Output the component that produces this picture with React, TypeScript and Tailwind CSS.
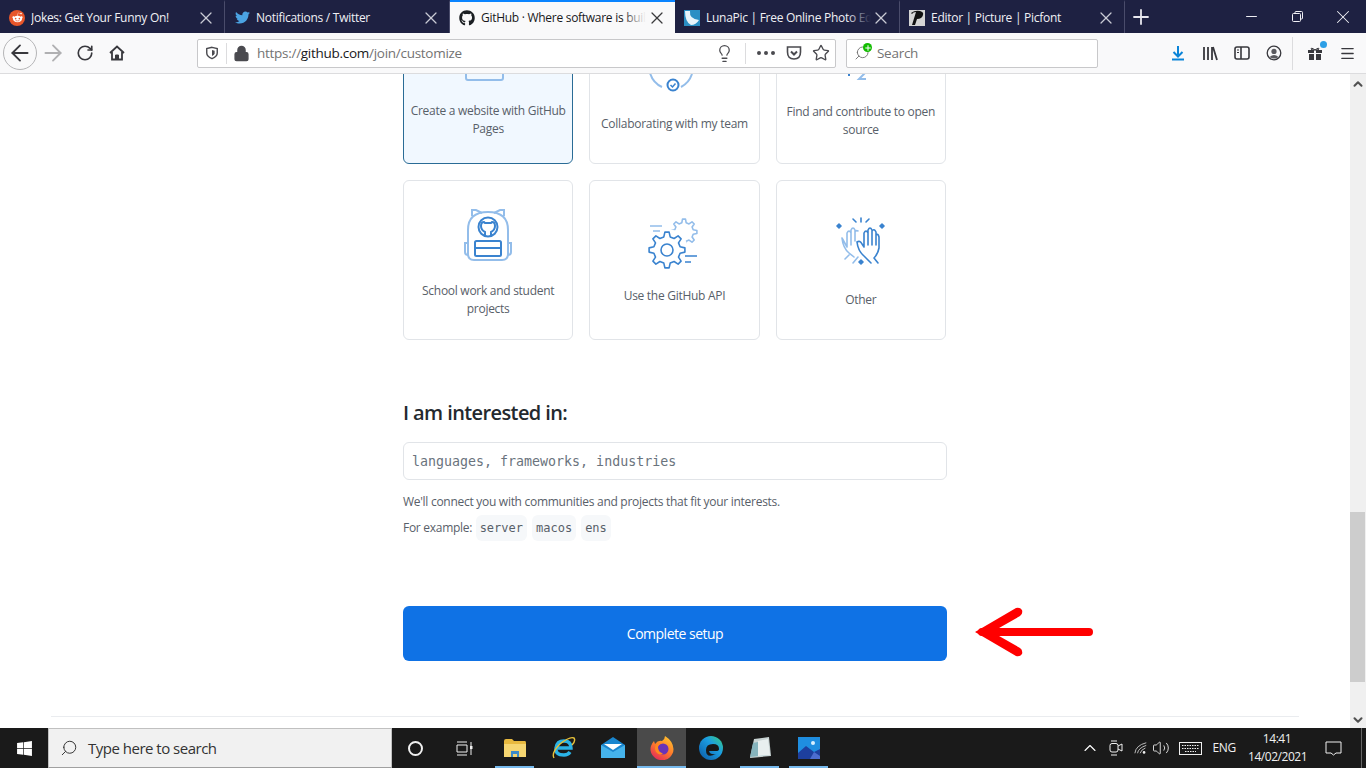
import React from 'react';
import { FaGithub, FaRedditAlien, FaTwitter, FaWindows } from 'react-icons/fa';
import {
  ArrowLeft,
  ArrowRight,
  ChevronDown,
  ChevronUp,
  Ellipsis,
  Lightbulb,
  Lock,
  Menu,
  Minus,
  Plus,
  RotateCw,
  Search,
  Star,
  Volume2,
  X,
} from 'lucide-react';

const BLUE = '#3a83cf';
const LIGHT = '#93bdea';

const gearPath = (cx: number, cy: number, outer: number, inner: number, teeth: number) => {
  const pts: string[] = [];
  for (let i = 0; i < teeth; i++) {
    const a = (i / teeth) * Math.PI * 2;
    const w = Math.PI / teeth / 2;
    [
      [inner, a - w * 1.2],
      [outer, a - w * 0.6],
      [outer, a + w * 0.6],
      [inner, a + w * 1.2],
    ].forEach(([r, t]) => {
      pts.push(`${(cx + r * Math.cos(t)).toFixed(1)} ${(cy + r * Math.sin(t)).toFixed(1)}`);
    });
  }
  return `M${pts.join('L')}Z`;
};

const WebsiteIcon = () => (
  <svg width="56" height="56" viewBox="0 0 56 56" fill="none" strokeWidth="2" stroke={LIGHT}>
    <rect x="6" y="10" width="37" height="40" rx="2" />
  </svg>
);

const TeamIcon = () => (
  <svg width="64" height="64" viewBox="0 0 64 64" fill="none" strokeWidth="2">
    <path d="M8 38 Q11 48 20 52" stroke={LIGHT} />
    <path d="M39 52 Q47 48 50 39" stroke={LIGHT} />
    <circle cx="31" cy="50" r="5.5" stroke={BLUE} />
    <path d="M28.5 50 l2 2 l3 -3.5" stroke={BLUE} strokeWidth="1.5" />
  </svg>
);

const OpenSourceIcon = () => (
  <svg width="58" height="58" viewBox="0 0 58 58" fill="none" strokeWidth="2" stroke={LIGHT}>
    <path d="M17 44 v3" stroke={BLUE} />
    <path d="M34 43 L27 50 H34" />
  </svg>
);

const BackpackIcon = () => (
  <svg width="64" height="64" viewBox="0 0 64 64" fill="none" strokeWidth="2">
    <path d="M16 14 V8 H20 L26 11 M48 14 V8 H44 L38 11" stroke={LIGHT} />
    <path d="M12 52 V28 Q12 10 32 10 Q52 10 52 28 V52 Q52 58 46 58 H18 Q12 58 12 52Z" stroke={LIGHT} />
    <path d="M12 41 H9 V50 Q9 53 12 53 M52 41 H55 V50 Q55 53 52 53" stroke={LIGHT} />
    <circle cx="32" cy="25" r="9.5" stroke={BLUE} />
    <path d="M29 34 V30 Q25 28 25 24 Q25 20 28 20 L29 21 H35 L36 20 Q39 20 39 24 Q39 28 35 30 V34" stroke={BLUE} />
    <rect x="19" y="39" width="26" height="15" rx="1.5" stroke={BLUE} />
    <path d="M19 46 H45" stroke={BLUE} />
  </svg>
);

const GearsIcon = () => (
  <svg width="56" height="56" viewBox="0 0 56 56" fill="none" strokeWidth="1.6">
    <path d={gearPath(38, 17, 13, 9.5, 8)} stroke={LIGHT} strokeLinejoin="round" />
    <circle cx="21" cy="35" r="21" fill="#fff" />
    <path d={gearPath(21, 35, 18, 13.5, 8)} stroke={BLUE} strokeLinejoin="round" fill="#fff" />
    <circle cx="21" cy="35" r="6" stroke={BLUE} />
    <path d="M4 11 H16 M7 16 H14" stroke={LIGHT} />
    <path d="M39 41 H51 M39 47 H45" stroke={BLUE} />
  </svg>
);

const HandsIcon = () => (
  <svg width="64" height="64" viewBox="0 0 64 64" fill="none" strokeWidth="1.6" strokeLinecap="round" strokeLinejoin="round">
    <path d="M32 7 V11 M24 8 L27 11 M40 8 L37 11" stroke={BLUE} />
    <path d="M10 13 L12 15 L10 17 L8 15Z M53 13 L55 15 L53 17 L51 15Z M32 49 L34 51 L32 53 L30 51Z" fill={BLUE} stroke={BLUE} />
    <path d="M13 27 L18 36 V22 Q20 18 22 22 V19 Q24 15 26 19 V21 Q27 19 29 20 M13 27 Q14 37 20 42 L25 46 M22 22 V34 M26 19 V30 M16 48 L20 44 M24 52 L29 46" stroke={LIGHT} />
    <path d="M28 31 Q31 29 33 33 L35 36 V22 Q37 18 39 22 V19 Q41 15 43 19 V20 Q45 17 47 21 V24 Q49 22 50 26 V37 Q49 43 45 47 L49 52 M28 31 Q29 40 35 45 L42 52 M39 22 V34 M43 19 V34 M47 21 V34" stroke={BLUE} />
  </svg>
);

const cards = [
  { label: 'Create a website with GitHub Pages', icon: <WebsiteIcon />, selected: true },
  { label: 'Collaborating with my team', icon: <TeamIcon /> },
  { label: 'Find and contribute to open source', icon: <OpenSourceIcon /> },
  { label: 'School work and student projects', icon: <BackpackIcon /> },
  { label: 'Use the GitHub API', icon: <GearsIcon /> },
  { label: 'Other', icon: <HandsIcon /> },
];

const Tab = ({
  icon,
  title,
  active,
  fade,
}: {
  icon: React.ReactNode;
  title: string;
  active?: boolean;
  fade?: boolean;
}) => (
  <div
    className={`relative flex h-[33px] w-[225px] items-center pl-[9px] pr-[8px] ${
      active
        ? 'border-t-2 border-[#0a84ff] bg-[#f9f9fa] text-[#18181a]'
        : 'border-r border-t-2 border-r-[#4a4c6b] border-t-transparent text-[#f0f0f5]'
    }`}
  >
    <span className="flex h-4 w-4 shrink-0 items-center justify-center">{icon}</span>
    <span className="relative ml-[6px] w-[165px] overflow-hidden whitespace-nowrap text-xs">
      {title}
      {fade && (
        <span
          className={`absolute right-0 top-0 h-full w-6 bg-gradient-to-r from-transparent ${
            active ? 'to-[#f9f9fa]' : 'to-[#1e2142]'
          }`}
        />
      )}
    </span>
    <X size={20} strokeWidth={1.5} className={`ml-auto ${active ? 'text-[#3a3a3c]' : 'text-[#c9cad4]'}`} />
  </div>
);

const TabBar = () => (
  <div className="flex h-[33px] shrink-0 items-center bg-[#1e2142]">
    <Tab
      title="Jokes: Get Your Funny On!"
      icon={
        <span className="flex h-4 w-4 items-center justify-center rounded-full bg-[#e8562a]">
          <FaRedditAlien size={11} className="text-white" />
        </span>
      }
    />
    <Tab title="Notifications / Twitter" icon={<FaTwitter size={15} className="text-[#4ba3e3]" />} />
    <Tab title="GitHub · Where software is built" active fade icon={<FaGithub size={16} className="text-[#1b1f23]" />} />
    <Tab
      title="LunaPic | Free Online Photo Editor"
      fade
      icon={
        <svg width="16" height="16" viewBox="0 0 16 16">
          <rect width="16" height="16" fill="#2b8fc4" />
          <path d="M1 1 h5 q-1 8 9 9 q-3 5 -8 5 q-6 -3 -6 -14z" fill="#e8f4fa" />
        </svg>
      }
    />
    <Tab
      title="Editor | Picture | Picfont"
      icon={
        <span className="flex h-4 w-4 items-center justify-center bg-[#d5d5d5]">
          <svg width="14" height="16" viewBox="0 0 14 16">
            <path d="M1 3 q4 -3 9 -2 q4 1 3 4 q-1 4 -6 4 l-2 6 h-3 l4 -13 q-3 0 -4 2z" fill="#111" />
          </svg>
        </span>
      }
    />
    <Plus size={24} strokeWidth={1.8} className="ml-[4px] text-[#e8e8ef]" />
    <div className="ml-auto flex items-center text-[#f0f0f5]">
      <Minus size={17} strokeWidth={1.4} className="mr-[32px]" />
      <svg width="11" height="11" viewBox="0 0 11 11" fill="none" stroke="#f0f0f5" className="mr-[29px]">
        <rect x="0.5" y="2.5" width="8" height="8" rx="1" />
        <path d="M3 2.5 V1.5 Q3 0.5 4 0.5 H9.5 Q10.5 0.5 10.5 1.5 V7 Q10.5 8 9.5 8 H8.5" />
      </svg>
      <X size={22} strokeWidth={1.1} className="mr-[12px]" />
    </div>
  </div>
);

const GiftIcon = () => (
  <span className="relative block h-4 w-4">
    <svg width="16" height="16" viewBox="0 0 16 16" fill="#38383d">
      <path d="M1 5 h6 v3 h-6z M9 5 h6 v3 h-6z M2 9 h5 v6 h-5z M9 9 h5 v6 h-5z" />
      <path d="M8 5 q-4 -3 -4 -1 q0 1 4 1 q4 0 4 -1 q0 -2 -4 1" fill="none" stroke="#38383d" />
    </svg>
    <span className="absolute -right-1 -top-1 h-[7px] w-[7px] rounded-full bg-[#2c9fe6]" />
  </span>
);

const Toolbar = () => (
  <div className="flex h-[41px] shrink-0 items-center border-b border-[#dcdcde] bg-[#f9f9fa] text-[#38383d]">
    <span className="ml-[3px] flex h-[34px] w-[34px] items-center justify-center rounded-full border border-[#b5b5b7]">
      <ArrowLeft size={26} strokeWidth={1.7} />
    </span>
    <ArrowRight size={26} strokeWidth={1.7} className="ml-[3px] text-[#b0b0b2]" />
    <RotateCw size={18} strokeWidth={2.2} className="ml-[10px] mr-[1px]" />
    <svg width="16" height="16" viewBox="0 0 16 16" fill="none" stroke="#38383d" strokeWidth="1.8" className="ml-[14px] mr-[2px]">
      <path d="M1 8 L8 1.5 L15 8 M3 7 V14.5 H13 V7" />
      <path d="M6.5 14.5 V10 H9.5 V14.5" fill="#38383d" strokeWidth="1" />
    </svg>

    <div className="ml-[70px] flex h-[29px] w-[639px] items-center rounded-[2px] border border-[#c8c8ca] bg-white">
      <svg width="14" height="14" viewBox="0 0 16 16" fill="none" stroke="#4a4a4f" strokeWidth="1.6" className="ml-[7px]">
        <path d="M8 1.5 l6 1.5 v5 q0 4 -6 6.5 q-6 -2.5 -6 -6.5 v-5z" />
        <path d="M8 4.5 l3 .8 v3 q0 2 -3 3.2z" fill="#4a4a4f" stroke="none" />
      </svg>
      <span className="ml-[7px] h-[21px] w-px bg-[#dcdcde]" />
      <Lock size={17} fill="#4a4a4f" strokeWidth={2} className="ml-[6px] text-[#4a4a4f]" />
      <span className="ml-[7px] mt-[1px] text-[13.5px] text-[#737373]">
        https://<span className="text-[#18181a]">github.com</span>/join/customize
      </span>
      <Lightbulb size={19} strokeWidth={1.6} className="ml-auto text-[#4a4a4f]" />
      <span className="ml-[11px] h-[21px] w-px bg-[#dcdcde]" />
      <Ellipsis size={24} strokeWidth={2} className="ml-[8px] text-[#4a4a4f]" />
      <svg width="16" height="16" viewBox="0 0 16 16" fill="none" stroke="#4a4a4f" strokeWidth="1.6" className="ml-[8px]">
        <path d="M1.5 2 h13 v5 q0 7 -6.5 7 q-6.5 0 -6.5 -7z" />
        <path d="M5 6.5 l3 3 l3 -3" strokeWidth="2" />
      </svg>
      <Star size={18} strokeWidth={1.8} className="ml-[10px] mr-[5px] text-[#4a4a4f]" />
    </div>

    <div className="ml-[10px] flex h-[29px] w-[252px] items-center rounded-[2px] border border-[#c8c8ca] bg-white">
      <span className="relative ml-[7px] block h-4 w-4">
        <Search size={16} strokeWidth={1.4} className="-scale-x-100 text-[#737373]" />
        <span className="absolute -right-[2px] -top-[2px] flex h-[9px] w-[9px] items-center justify-center rounded-full bg-[#12bc00]">
          <Plus size={8} strokeWidth={3} className="text-white" />
        </span>
      </span>
      <span className="ml-[7px] mt-[1px] text-[13.5px] text-[#737373]">Search</span>
    </div>

    <svg width="14" height="16" viewBox="0 0 14 16" fill="none" stroke="#0a84d8" strokeWidth="2" className="ml-[73px]">
      <path d="M7 1 v10 M2.5 7 l4.5 4.5 l4.5 -4.5" />
      <path d="M1 14.5 h12" />
    </svg>
    <svg width="16" height="15" viewBox="0 0 16 15" fill="none" stroke="#38383d" strokeWidth="1.8" className="ml-[17px]">
      <path d="M2 1 v13 M6 1 v13 M10 1 v13 M11 1 l4 13" />
    </svg>
    <svg width="16" height="14" viewBox="0 0 16 14" fill="none" stroke="#38383d" strokeWidth="1.6" className="ml-[16px]">
      <rect x="1" y="1" width="14" height="12" rx="2" />
      <path d="M7 1 v12" />
      <path d="M3 4 h2 M3 6.5 h2" strokeWidth="1.2" />
    </svg>
    <svg width="16" height="16" viewBox="0 0 16 16" fill="none" stroke="#38383d" strokeWidth="1.3" className="ml-[16px]">
      <circle cx="8" cy="8" r="6.8" />
      <circle cx="8" cy="6.4" r="2.6" fill="#5a5a5f" stroke="none" />
      <path d="M3.5 12 q4.5 -4 9 0 q-4.5 3 -9 0" fill="#5a5a5f" stroke="none" />
    </svg>
    <span className="ml-[10px] h-[33px] w-px bg-[#dcdcde]" />
    <span className="ml-[14px]">
      <GiftIcon />
    </span>
    <Menu size={17} strokeWidth={1.8} className="ml-[16px]" />
  </div>
);

const Card = ({ label, icon, selected }: { label: string; icon: React.ReactNode; selected?: boolean }) => (
  <div
    className={`flex h-[160px] flex-col items-center justify-center rounded-md border px-[6px] text-center ${
      selected ? 'border-[#2a6c96] bg-[#f1f8ff]' : 'border-[#e1e4e8] bg-white'
    }`}
  >
    {icon}
    <p className="mt-4 text-xs leading-[18px] text-[#586069]">{label}</p>
  </div>
);

const Page = () => (
  <div className="relative min-w-0 flex-1 overflow-hidden bg-white">
    <div className="mx-auto -mt-[70px] w-[544px]">
      <div className="grid w-[543px] grid-cols-3 gap-4">
        {cards.map((card) => (
          <Card key={card.label} {...card} />
        ))}
      </div>

      <h2 className="mt-[58px] text-xl font-semibold leading-[30px] tracking-[-0.6px] text-[#24292e]">I am interested in:</h2>
      <div className="mt-[14px] flex h-[38px] items-center rounded-md border border-[#e1e4e8] px-2 pt-[1px] font-['DejaVu_Sans_Mono',monospace] text-[13.3px] tracking-normal text-[#6a737d]">
        languages, frameworks, industries
      </div>
      <p className="mt-[13px] text-xs leading-[18px] text-[#586069]">
        We'll connect you with communities and projects that fit your interests.
      </p>
      <div className="mt-[4px] flex h-[26px] items-center text-xs text-[#586069]">
        <span className="mr-[1px]">For example:</span>
        {['server', 'macos', 'ens'].map((tag) => (
          <span
            key={tag}
            className="mx-[2.5px] flex h-[26px] items-center rounded-md bg-[#f6f8fa] px-1 font-['DejaVu_Sans_Mono',monospace] text-[12px] tracking-normal"
          >
            {tag}
          </span>
        ))}
      </div>

      <button
        type="button"
        className="mt-[65px] flex h-[55px] w-full items-center justify-center rounded-md bg-[#0f72e5] text-sm tracking-[-0.5px] text-white"
      >
        Complete setup
      </button>
    </div>
    <div className="mx-[51px] mt-[55px] h-px bg-[#eaecef]" />

    <svg width="130" height="60" viewBox="0 0 130 60" fill="none" className="absolute left-[970px] top-[528px]">
      <path d="M12 30 H119" stroke="#ff0000" strokeWidth="8" strokeLinecap="round" />
      <path d="M5 30 L46 6 Q50 5 52 8 Q53 12 50 14 L22 30 L50 46 Q53 48 52 52 Q50 55 46 54 Z" fill="#ff0000" />
    </svg>
  </div>
);

const Scrollbar = () => (
  <div className="flex w-4 shrink-0 flex-col bg-[#f0f0f0]">
    <ChevronUp size={14} strokeWidth={3.5} className="mx-auto mt-[3px] text-[#505050]" />
    <div className="mt-[421px] h-[170px] w-[15px] bg-[#cdcdcd]" />
    <ChevronDown size={14} strokeWidth={3.5} className="mx-auto mb-[1px] mt-auto text-[#505050]" />
  </div>
);

const FolderIcon = () => (
  <svg width="24" height="22" viewBox="0 0 24 22">
    <path d="M1 4 q0 -2 2 -2 h6 l2 2 h11 q1 0 1 2 v14 h-22z" fill="#e8b93f" />
    <path d="M1 7 h22 v13 h-22z" fill="#f6d672" />
    <path d="M8 14 h8 v6 h-2 v-3 h-4 v3 h-2z" fill="#3d8bc9" />
  </svg>
);

const IeIcon = () => (
  <svg width="24" height="24" viewBox="0 0 24 24" fill="none">
    <path d="M4 12 h15 q0 -7 -7 -7 q-7 0 -8 7 q-1 7 8 7 q4 0 6 -3" stroke="#2bb3e6" strokeWidth="3.4" />
    <path d="M2 22 Q-1 17 8 8 Q18 0 22 2 Q24 5 20 9" stroke="#e8c23a" strokeWidth="1.4" />
  </svg>
);

const MailIcon = () => (
  <svg width="24" height="22" viewBox="0 0 24 22">
    <path d="M0 8 L12 0 L24 8 V21 H0z" fill="#1a86cf" />
    <path d="M0 8 L12 15 L24 8 V21 H0z" fill="#45b3ec" />
    <path d="M3 7 h18 l-9 6z" fill="#fff" />
  </svg>
);

const FirefoxIcon = () => (
  <svg width="24" height="24" viewBox="0 0 24 24">
    <defs>
      <linearGradient id="ffx" x1="0.8" y1="0" x2="0.2" y2="1">
        <stop offset="0" stopColor="#ffc52e" />
        <stop offset="0.5" stopColor="#ff7a2b" />
        <stop offset="1" stopColor="#e3265c" />
      </linearGradient>
    </defs>
    <path d="M15 0 Q23 5 23.5 13 A11.5 11 0 1 1 1 10 Q2 7 4 5 L5 8 Q8 4 12 5 Q15 3 15 0Z" fill="url(#ffx)" />
    <circle cx="13" cy="13" r="5.5" fill="#6a33b8" />
    <path d="M6 9 Q9 6 12 7.5 Q8 8 8 11 Q8 16 13 17.5 Q9 20 6 16 Q4 12 6 9Z" fill="#ff8a1f" />
  </svg>
);

const EdgeIcon = () => (
  <svg width="24" height="24" viewBox="0 0 24 24">
    <defs>
      <linearGradient id="edg" x1="0" y1="1" x2="1" y2="0">
        <stop offset="0" stopColor="#0c59a4" />
        <stop offset="0.6" stopColor="#1b9de2" />
        <stop offset="1" stopColor="#3bd17a" />
      </linearGradient>
    </defs>
    <circle cx="12" cy="12" r="12" fill="url(#edg)" />
    <path d="M7 14 q0 -6 7 -6 q6 0 6 5 q0 2 -3 2 h-7 q1 4 7 3 q-10 5 -10 -4z" fill="#181818" />
  </svg>
);

const NotepadIcon = () => (
  <svg width="24" height="24" viewBox="0 0 24 24">
    <path d="M6 3 L21 1 L23 20 L2 22z" fill="#c9d4d4" />
    <path d="M5 7 L19 4 L21 19 L2 21z" fill="#86b4bd" />
    <path d="M10 5 L20 3 L22 19 L10 20z" fill="#e8efef" />
  </svg>
);

const PhotosIcon = () => (
  <svg width="22" height="22" viewBox="0 0 22 22">
    <rect width="22" height="22" fill="#1f8ee0" />
    <circle cx="15" cy="6" r="2" fill="#d8f0ff" />
    <path d="M0 22 V16 L8 9 L16 15 L22 12 V22z" fill="#1d3f9e" />
    <path d="M12 22 L16 15 L22 19 V22z" fill="#4c6dd0" />
  </svg>
);

const taskApps = [
  { icon: <FolderIcon />, open: true },
  { icon: <IeIcon /> },
  { icon: <MailIcon /> },
  { icon: <FirefoxIcon />, open: true, active: true },
  { icon: <EdgeIcon /> },
  { icon: <NotepadIcon />, open: true },
  { icon: <PhotosIcon />, open: true },
];

const Taskbar = () => (
  <div className="flex h-10 shrink-0 items-center bg-[#1a1a1a] text-white">
    <span className="flex h-10 w-12 items-center justify-center">
      <FaWindows size={17} />
    </span>
    <div className="flex h-10 w-[344px] items-center border border-[#c0c0c0] border-b-[#a0a0a0] bg-[#f1f1f1] text-[#333]">
      <Search size={18} strokeWidth={1.3} className="ml-[11px] -scale-x-100" />
      <span className="ml-[10px] text-[15px] tracking-[-0.5px]">Type here to search</span>
    </div>
    <span className="ml-[16px] block h-[15px] w-[15px] rounded-full border-2 border-[#f0f0f0]" />
    <svg width="17" height="15" viewBox="0 0 17 15" fill="none" stroke="#f0f0f0" strokeWidth="1" className="ml-[33px]">
      <path d="M1 4 h10 v7 h-10z M1 1 h10 M1 14 h10 M15 1 v13" />
      <path d="M14 5 h2.5 v3 h-2.5z" fill="#f0f0f0" stroke="none" />
    </svg>
    <div className="ml-[17px] flex h-10">
      {taskApps.map((app, i) => (
        <span
          key={i}
          className={`relative flex h-10 w-[49px] items-center justify-center ${app.active ? 'bg-[#4a4a4a]' : ''}`}
        >
          {app.icon}
          {app.open && (
            <span className={`absolute bottom-0 h-[2px] bg-[#76b9ed] ${app.active ? 'inset-x-0' : 'inset-x-[5px]'}`} />
          )}
        </span>
      ))}
    </div>

    <div className="ml-auto flex items-center">
      <ChevronUp size={20} strokeWidth={1.3} />
      <svg width="14" height="16" viewBox="0 0 14 16" fill="none" stroke="#f0f0f0" className="ml-[9px]">
        <rect x="1" y="3.5" width="8" height="8.5" rx="2" />
        <path d="M9 6 l4 -2 v7 l-4 -2 M2 1 h6 M2 15 h6" />
      </svg>
      <svg width="14" height="14" viewBox="0 0 16 14" fill="none" stroke="#d0d0d0" className="ml-[11px]">
        <path d="M1 13 Q2 4 14 1 M4 13 Q5 7 14 4 M7 13 Q8 9 13 7" />
        <circle cx="11.5" cy="12" r="1.5" fill="#f0f0f0" stroke="none" />
      </svg>
      <Volume2 size={18} strokeWidth={1.1} className="ml-[4px]" />
      <svg width="23" height="13" viewBox="0 0 23 13" fill="none" stroke="#f0f0f0" className="ml-[9px]">
        <rect x="0.5" y="0.5" width="22" height="12" />
        <path d="M3 3.5 h17 M3 6.5 h17 M6 9.5 h11" strokeDasharray="1.5 1" />
      </svg>
      <span className="ml-[10px] text-xs text-[#f0f0f0]">ENG</span>
      <div className="ml-[12px] w-[58px] text-center text-xs leading-[18px] tracking-[-0.45px] text-[#f0f0f0]">
        <div>14:41</div>
        <div>14/02/2021</div>
      </div>
      <svg width="17" height="15" viewBox="0 0 17 15" fill="none" stroke="#f0f0f0" className="ml-[19px]">
        <path d="M1 1 h15 v11 h-5 l-2.5 2 l-2.5 -2 h-5z" />
      </svg>
      <span className="ml-[19px] h-10 w-px bg-[#666]" />
      <span className="w-[4px]" />
    </div>
  </div>
);

export default function App() {
  return (
    <div className="flex h-[768px] w-[1366px] flex-col overflow-hidden bg-white font-['Open_Sans',sans-serif] tracking-[-0.28px]">
      <TabBar />
      <Toolbar />
      <div className="flex min-h-0 flex-1">
        <Page />
        <Scrollbar />
      </div>
      <Taskbar />
    </div>
  );
}
